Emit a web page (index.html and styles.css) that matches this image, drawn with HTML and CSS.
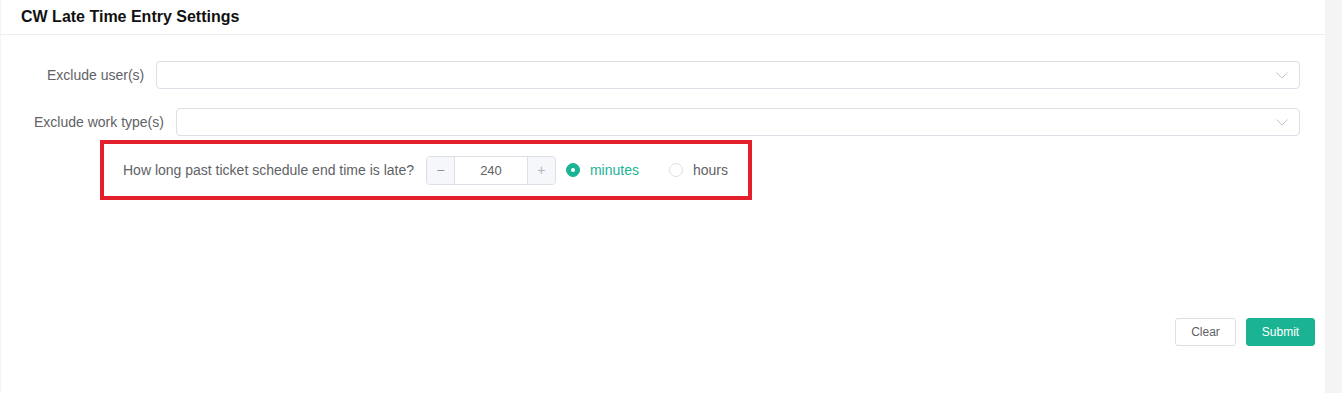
FILE: index.html
```html
<!DOCTYPE html>
<html lang="en">
<head>
    <meta charset="UTF-8">
    <meta name="viewport" content="width=device-width, initial-scale=1.0">
    <title>CW Late Time Entry Settings</title>
    <link rel="stylesheet" href="styles.css">
</head>
<body>
    <div class="card">
        <div class="card-header">CW Late Time Entry Settings</div>
        <div class="card-body">
            <div class="form-row row-users">
                <label class="form-label">Exclude user(s)</label>
                <div class="select-box">
                    <svg class="chevron" width="12" height="7" viewBox="0 0 12 7"><path d="M0.5 0.5 L6 6 L11.5 0.5" fill="none" stroke="#c0c4cc" stroke-width="1"/></svg>
                </div>
            </div>
            <div class="form-row row-types">
                <label class="form-label">Exclude work type(s)</label>
                <div class="select-box">
                    <svg class="chevron" width="12" height="7" viewBox="0 0 12 7"><path d="M0.5 0.5 L6 6 L11.5 0.5" fill="none" stroke="#c0c4cc" stroke-width="1"/></svg>
                </div>
            </div>
            <div class="late-box">
                <span class="late-label">How long past ticket schedule end time is late?</span>
                <div class="number-input">
                    <span class="step step-minus">&minus;</span>
                    <span class="number-value">240</span>
                    <span class="step step-plus">+</span>
                </div>
                <label class="radio checked"><span class="radio-dot"></span>minutes</label>
                <label class="radio"><span class="radio-dot"></span>hours</label>
            </div>
            <div class="actions">
                <button class="btn btn-clear">Clear</button>
                <button class="btn btn-submit">Submit</button>
            </div>
        </div>
    </div>
</body>
</html>
```

FILE: styles.css
```css
* {
    margin: 0;
    padding: 0;
    box-sizing: border-box;
}

body {
    font-family: "Liberation Sans", Arial, sans-serif;
    background-color: #f4f4f5;
    height: 393px;
    overflow: hidden;
}

.card {
    background-color: #fff;
    width: 1324px;
    height: 393px;
    margin-left: 1px;
}

.card-header {
    height: 35px;
    line-height: 34px;
    padding-left: 20px;
    font-size: 16px;
    font-weight: bold;
    color: #111;
    border-bottom: 1px solid #ebeef5;
}

.card-body {
    padding: 26px 25px 0 0;
}

.form-row {
    display: flex;
    align-items: center;
    height: 28px;
}

.row-users {
    margin-left: 46px;
}

.row-types {
    margin-top: 19px;
    margin-left: 33px;
}

.form-label {
    font-size: 14px;
    color: #606266;
    margin-right: 12px;
    white-space: nowrap;
}

.select-box {
    flex: 1;
    height: 28px;
    border: 1px solid #dcdfe6;
    border-radius: 4px;
    display: flex;
    align-items: center;
    justify-content: flex-end;
    padding-right: 11px;
}

.late-box {
    display: inline-flex;
    align-items: center;
    margin: 4px 0 0 99px;
    width: 652px;
    height: 60px;
    border: 4px solid #e3202b;
    padding: 0 20px 0 19px;
}

.late-label {
    font-size: 14px;
    color: #606266;
    margin-right: 12px;
    white-space: nowrap;
}

.number-input {
    display: flex;
    width: 130px;
    height: 29px;
    border: 1px solid #dcdfe6;
    border-radius: 4px;
    overflow: hidden;
    margin-right: 10px;
}

.step {
    width: 28px;
    background-color: #f5f7fa;
    color: #909399;
    font-size: 14px;
    display: flex;
    align-items: center;
    justify-content: center;
}

.step-minus {
    border-right: 1px solid #dcdfe6;
}

.step-plus {
    border-left: 1px solid #dcdfe6;
    color: #b0b4bc;
}

.number-value {
    flex: 1;
    display: flex;
    align-items: center;
    justify-content: center;
    font-size: 13px;
    color: #606266;
}

.radio {
    display: flex;
    align-items: center;
    font-size: 14px;
    color: #606266;
    margin-right: 30px;
}

.radio:last-child {
    margin-right: 0;
}

.radio-dot {
    width: 14px;
    height: 14px;
    border-radius: 50%;
    border: 1px solid #dcdfe6;
    margin-right: 10px;
    position: relative;
}

.radio.checked {
    color: #1ab394;
}

.radio.checked .radio-dot {
    background-color: #1ab394;
    border-color: #1ab394;
}

.radio.checked .radio-dot::after {
    content: "";
    position: absolute;
    width: 4px;
    height: 4px;
    border-radius: 50%;
    background-color: #fff;
    left: 4px;
    top: 4px;
}

.actions {
    display: flex;
    justify-content: flex-end;
    gap: 10px;
    margin-top: 118px;
    margin-right: -15px;
}

.btn {
    height: 28px;
    font-family: inherit;
    font-size: 12px;
    border-radius: 3px;
    cursor: pointer;
}

.btn-clear {
    width: 61px;
    background-color: #fff;
    border: 1px solid #dcdfe6;
    color: #606266;
}

.btn-submit {
    width: 69px;
    background-color: #1ab394;
    border: 1px solid #1ab394;
    color: #fff;
}
```
